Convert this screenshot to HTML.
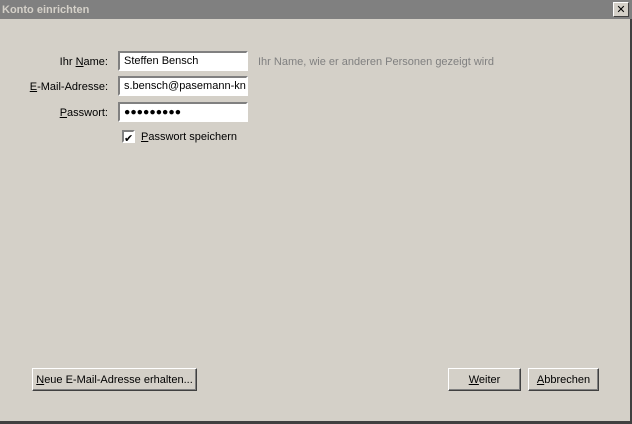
<!DOCTYPE html>
<html><head><style>
body{margin:0;width:632px;height:424px;background:#d4d0c8;font-family:"Liberation Sans",sans-serif;font-size:11px;color:#000;position:relative;overflow:hidden}
.t{position:absolute;left:0;top:0;width:632px;height:19px;background:#808080;color:#d4d0c8;font-weight:bold;font-size:11px;line-height:20px;text-indent:2px}
.x{position:absolute;left:613px;top:2px;width:14px;height:13px;background:#d4d0c8;border:1px solid;border-color:#fff #404040 #404040 #fff;font:bold 11px/13px "DejaVu Sans",sans-serif;text-align:center;color:#000}
.l{position:absolute;right:524px;text-align:right;white-space:nowrap}
.i{position:absolute;left:118px;width:122px;height:16px;background:#fff;border:2px solid;border-color:#808080 #fff #fff #808080;line-height:17px;padding-left:4px;overflow:hidden;white-space:nowrap}
.b{position:absolute;height:21px;border:1px solid;border-color:#fff #404040 #404040 #fff;box-shadow:inset -1px -1px 0 #808080;text-align:center;line-height:22px;background:#d4d0c8;white-space:nowrap}
u{text-decoration:underline}
</style></head><body>
<div class="t">Konto einrichten</div>
<div class="x">✕</div>
<div class="l" style="top:56px">Ihr <u>N</u>ame:</div>
<div class="l" style="top:81px"><u>E</u>-Mail-Adresse:</div>
<div class="l" style="top:107px"><u>P</u>asswort:</div>
<div class="i" style="top:51px">Steffen Bensch</div>
<div class="i" style="top:76px">s.bensch@pasemann-knecht</div>
<div class="i" style="top:102px;font-size:10.5px">●●●●●●●●●</div>
<div style="position:absolute;left:258px;top:56px;color:#808080;white-space:nowrap">Ihr Name, wie er anderen Personen gezeigt wird</div>
<div style="position:absolute;left:122px;top:130px;width:9px;height:9px;background:#fff;border:2px solid;border-color:#808080 #fff #fff #808080;font:bold 9px/10px "DejaVu Sans",sans-serif;text-align:center">✔</div>
<div style="position:absolute;left:141px;top:131px"><u>P</u>asswort speichern</div>
<div class="b" style="left:32px;top:368px;width:163px"><u>N</u>eue E-Mail-Adresse erhalten...</div>
<div class="b" style="left:448px;top:368px;width:71px"><u>W</u>eiter</div>
<div class="b" style="left:528px;top:368px;width:69px"><u>A</u>bbrechen</div>
<div style="position:absolute;left:0;top:421px;width:632px;height:3px;background:#404040"></div>
<div style="position:absolute;left:630px;top:19px;width:2px;height:405px;background:#404040"></div>
</body></html>
